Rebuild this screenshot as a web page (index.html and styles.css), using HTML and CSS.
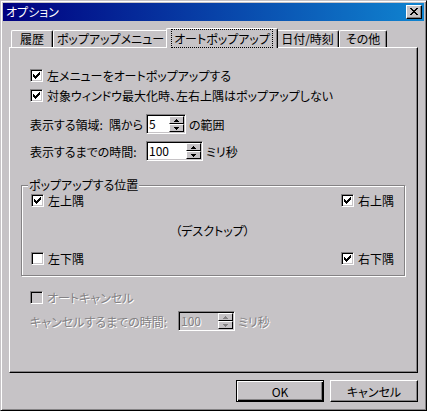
FILE: index.html
```html
<!DOCTYPE html>
<html lang="ja">
<head>
    <meta charset="UTF-8">
    <meta name="viewport" content="width=device-width, initial-scale=1.0">
    <title>オプション</title>
    <link rel="stylesheet" href="styles.css">
</head>
<body>
    <div class="window">
        <div class="titlebar">
            <span class="title">オプション</span>
            <span class="close-btn">
                <svg width="8" height="7" viewBox="0 0 8 7"><path d="M0 0h2v1h-2z M6 0h2v1h-2z M1 1h2v1h-2z M5 1h2v1h-2z M2 2h4v1h-4z M3 3h2v1h-2z M2 4h4v1h-4z M1 5h2v1h-2z M5 5h2v1h-2z M0 6h2v1h-2z M6 6h2v1h-2z"/></svg>
            </span>
        </div>

        <div class="tabs">
            <div class="tab tab-history">履歴</div>
            <div class="tab tab-menu">ポップアップメニュー</div>
            <div class="tab tab-auto active"><span class="focus">オートポップアップ</span></div>
            <div class="tab tab-date">日付/時刻</div>
            <div class="tab tab-other">その他</div>
        </div>

        <div class="panel">
            <label class="check-row indent first">
                <span class="checkbox"><svg width="7" height="7" viewBox="0 0 7 7"><path d="M6 0h1v1h-1z M5 1h2v1h-2z M0 2h1v1h-1z M4 2h3v1h-3z M0 3h2v1h-2z M3 3h3v1h-3z M0 4h5v1h-5z M1 5h3v1h-3z M2 6h1v1h-1z"/></svg></span>
                左メニューをオートポップアップする
            </label>
            <label class="check-row indent second">
                <span class="checkbox"><svg width="7" height="7" viewBox="0 0 7 7"><path d="M6 0h1v1h-1z M5 1h2v1h-2z M0 2h1v1h-1z M4 2h3v1h-3z M0 3h2v1h-2z M3 3h3v1h-3z M0 4h5v1h-5z M1 5h3v1h-3z M2 6h1v1h-1z"/></svg></span>
                対象ウィンドウ最大化時、左右上隅はポップアップしない
            </label>

            <div class="field-row indent range-row">
                <span class="field-label"><span>表示する領域:</span><span>隅から</span></span>
                <span class="spin-edit narrow">
                    <span class="spin-value">5</span>
                    <span class="spin">
                        <span class="spin-btn"><svg width="5" height="3" viewBox="0 0 5 3"><path d="M2 0h1v1h-1z M1 1h3v1h-3z M0 2h5v1h-5z"/></svg></span>
                        <span class="spin-btn"><svg width="5" height="3" viewBox="0 0 5 3"><path d="M0 0h5v1h-5z M1 1h3v1h-3z M2 2h1v1h-1z"/></svg></span>
                    </span>
                </span>
                <span class="unit">の範囲</span>
            </div>

            <div class="field-row indent time-row">
                <span class="field-label">表示するまでの時間:</span>
                <span class="spin-edit wide">
                    <span class="spin-value">100</span>
                    <span class="spin">
                        <span class="spin-btn"><svg width="5" height="3" viewBox="0 0 5 3"><path d="M2 0h1v1h-1z M1 1h3v1h-3z M0 2h5v1h-5z"/></svg></span>
                        <span class="spin-btn"><svg width="5" height="3" viewBox="0 0 5 3"><path d="M0 0h5v1h-5z M1 1h3v1h-3z M2 2h1v1h-1z"/></svg></span>
                    </span>
                </span>
                <span class="unit">ミリ秒</span>
            </div>

            <fieldset class="groupbox">
                <legend>ポップアップする位置</legend>
                <div class="corner-row">
                    <label class="check-row">
                        <span class="checkbox"><svg width="7" height="7" viewBox="0 0 7 7"><path d="M6 0h1v1h-1z M5 1h2v1h-2z M0 2h1v1h-1z M4 2h3v1h-3z M0 3h2v1h-2z M3 3h3v1h-3z M0 4h5v1h-5z M1 5h3v1h-3z M2 6h1v1h-1z"/></svg></span>
                        左上隅
                    </label>
                    <label class="check-row">
                        <span class="checkbox"><svg width="7" height="7" viewBox="0 0 7 7"><path d="M6 0h1v1h-1z M5 1h2v1h-2z M0 2h1v1h-1z M4 2h3v1h-3z M0 3h2v1h-2z M3 3h3v1h-3z M0 4h5v1h-5z M1 5h3v1h-3z M2 6h1v1h-1z"/></svg></span>
                        右上隅
                    </label>
                </div>
                <div class="desktop">（デスクトップ）</div>
                <div class="corner-row">
                    <label class="check-row">
                        <span class="checkbox"></span>
                        左下隅
                    </label>
                    <label class="check-row">
                        <span class="checkbox"><svg width="7" height="7" viewBox="0 0 7 7"><path d="M6 0h1v1h-1z M5 1h2v1h-2z M0 2h1v1h-1z M4 2h3v1h-3z M0 3h2v1h-2z M3 3h3v1h-3z M0 4h5v1h-5z M1 5h3v1h-3z M2 6h1v1h-1z"/></svg></span>
                        右下隅
                    </label>
                </div>
            </fieldset>

            <label class="check-row indent disabled cancel-check">
                <span class="checkbox"></span>
                オートキャンセル
            </label>

            <div class="field-row indent disabled cancel-row">
                <span class="field-label">キャンセルするまでの時間:</span>
                <span class="spin-edit wide">
                    <span class="spin-value">100</span>
                    <span class="spin">
                        <span class="spin-btn"><svg width="5" height="3" viewBox="0 0 5 3"><path d="M2 0h1v1h-1z M1 1h3v1h-3z M0 2h5v1h-5z"/></svg></span>
                        <span class="spin-btn"><svg width="5" height="3" viewBox="0 0 5 3"><path d="M0 0h5v1h-5z M1 1h3v1h-3z M2 2h1v1h-1z"/></svg></span>
                    </span>
                </span>
                <span class="unit">ミリ秒</span>
            </div>
        </div>

        <div class="buttons">
            <button class="btn btn-default">OK</button>
            <button class="btn">キャンセル</button>
        </div>
    </div>
</body>
</html>
```

FILE: styles.css
```css
body {
    margin: 0;
    background-color: #c6c3c6;
    font-family: "Noto Sans CJK JP", sans-serif;
    font-size: 12px;
    font-feature-settings: "palt";
    color: #000;
}
svg {
    display: block;
    shape-rendering: crispEdges;
}
.window {
    width: 427px;
    height: 411px;
    box-sizing: border-box;
    border: 1px solid;
    border-color: #c6c3c6 #000 #000 #c6c3c6;
    box-shadow: inset 1px 1px #fff, inset -1px -1px #848284;
    padding: 2px;
    display: flex;
    flex-direction: column;
}
.titlebar {
    height: 18px;
    background: linear-gradient(to right, #000080, #1084d0);
    color: #fff;
    display: flex;
    align-items: center;
    justify-content: space-between;
    padding: 0 2px 0 3px;
    line-height: 18px;
}
.close-btn {
    width: 16px;
    height: 14px;
    box-sizing: border-box;
    background-color: #c6c3c6;
    border: 1px solid;
    border-color: #fff #000 #000 #fff;
    box-shadow: inset -1px -1px #848284;
    padding: 2px 0 0 3px;
}

/* tabs */
.tabs {
    display: flex;
    align-items: flex-end;
    margin: 7px 0 0 8px;
}
.tab {
    height: 17px;
    box-sizing: border-box;
    border: 1px solid;
    border-color: #fff #000 transparent #fff;
    border-bottom: none;
    border-radius: 2px 2px 0 0;
    box-shadow: inset -1px 0 #848284;
    text-align: center;
    line-height: 16px;
    background-color: #c6c3c6;
}
.tab-history { width: 42px; }
.tab-menu { width: 115px; }
.tab-auto { width: 108px; }
.tab-date { width: 63px; }
.tab-other { width: 48px; }
.tab.active {
    width: 112px;
    height: 20px;
    margin: 0 -2px -1px;
    position: relative;
    z-index: 1;
    line-height: 17px;
    padding-top: 1px;
}
.focus {
    outline: 1px dotted #000;
    padding: 0 2px;
}

/* panel */
.panel {
    height: 326px;
    box-sizing: border-box;
    margin: 0 6px;
    border: 1px solid;
    border-color: #fff #000 #000 #fff;
    box-shadow: inset -1px -1px #848284;
    padding: 21px 0 0 11px;
}
.indent {
    padding-left: 9px;
}
.check-row {
    display: flex;
    align-items: center;
    gap: 4px;
    height: 13px;
    white-space: nowrap;
}
.second {
    margin-top: 7px;
}
.checkbox {
    width: 13px;
    height: 13px;
    box-sizing: border-box;
    flex-shrink: 0;
    background-color: #fff;
    border: 1px solid;
    border-color: #848284 #fff #fff #848284;
    box-shadow: inset 1px 1px #000, inset -1px -1px #c6c3c6;
    padding: 2px 0 0 2px;
}
.field-row {
    display: flex;
    align-items: center;
    height: 20px;
    white-space: nowrap;
}
.range-row {
    margin-top: 12px;
}
.time-row {
    margin-top: 7px;
}
.field-label {
    display: flex;
    justify-content: space-between;
    width: 113px;
    margin-right: 3px;
}
.cancel-row .field-label {
    width: 145px;
}
.unit {
    margin-left: 3px;
}
.spin-edit {
    height: 20px;
    box-sizing: border-box;
    display: flex;
    background-color: #fff;
    border: 1px solid;
    border-color: #848284 #fff #fff #848284;
    box-shadow: inset 1px 1px #000, inset -1px -1px #c6c3c6;
    padding: 1px;
}
.spin-edit.narrow { width: 40px; }
.spin-edit.wide { width: 57px; }
.spin-value {
    flex: 1;
    padding-left: 1px;
    line-height: 16px;
}
.spin {
    width: 15px;
    display: flex;
    flex-direction: column;
}
.spin-btn {
    flex: 1;
    box-sizing: border-box;
    background-color: #c6c3c6;
    border: 1px solid;
    border-color: #fff #000 #000 #fff;
    display: flex;
    align-items: center;
    justify-content: center;
}

/* group box */
.groupbox {
    width: 384px;
    box-sizing: border-box;
    margin: 17px 0 0;
    padding: 0 10px 9px 9px;
    border: 1px solid #848284;
    box-shadow: inset 1px 1px #fff, 1px 1px #fff;
}
.groupbox legend {
    padding: 0 1px;
    margin-left: -3px;
    line-height: 14px;
    background-color: #c6c3c6;
}
.corner-row {
    display: flex;
    justify-content: space-between;
    align-items: center;
    height: 16px;
}
.desktop {
    text-align: center;
    line-height: 16px;
    margin: 15px 0 11px;
}
.cancel-check {
    margin-top: 15px;
}
.cancel-row {
    margin-top: 7px;
}
.disabled {
    color: #848284;
    text-shadow: 1px 1px 0 #fff;
}
.disabled .checkbox,
.disabled .spin-edit {
    background-color: #c6c3c6;
}
.disabled .spin-btn svg {
    fill: #848284;
}

/* buttons */
.buttons {
    display: flex;
    justify-content: flex-end;
    gap: 6px;
    margin: 7px 6px 0 0;
}
.btn {
    width: 88px;
    height: 22px;
    box-sizing: border-box;
    font-family: inherit;
    font-size: 12px;
    font-feature-settings: "palt";
    background-color: #c6c3c6;
    color: #000;
    border: 1px solid;
    border-color: #fff #000 #000 #fff;
    box-shadow: inset -1px -1px #848284;
    padding: 0;
}
.btn-default {
    border-color: #000;
    box-shadow: inset 1px 1px #fff, inset -1px -1px #000, inset -2px -2px #848284;
}
```
